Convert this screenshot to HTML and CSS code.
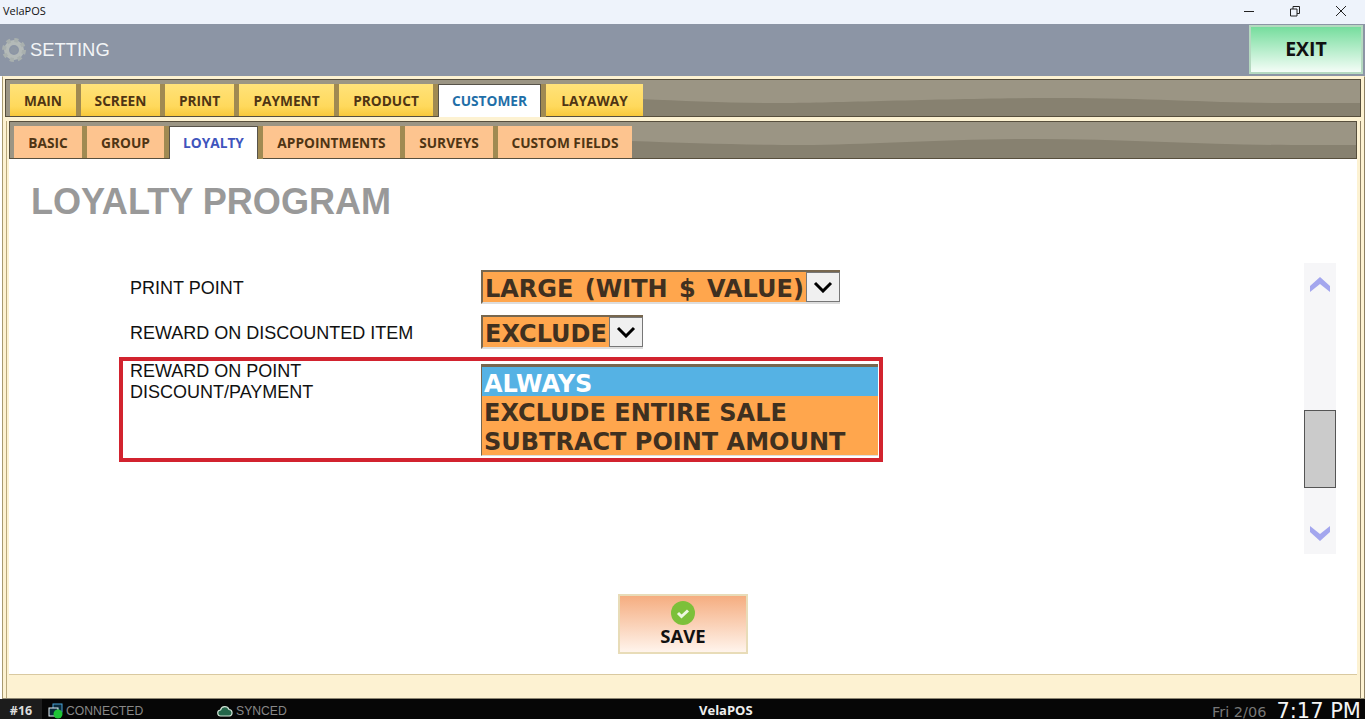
FILE: index.html
```html
<!DOCTYPE html>
<html lang="en">

<head>
    <meta charset="UTF-8" />
    <title>VelaPOS</title>
    <link rel="stylesheet" href="styles.css">
</head>

<body>
    <div class="titlebar">
        <span>VelaPOS</span>
        <div class="win-btns">
            <svg width="14" height="14" viewBox="0 0 14 14"><path d="M2 7.500h10" stroke="#222" fill="none"/></svg>
            <svg width="14" height="14" viewBox="0 0 14 14"><path d="M2.500 5h6.500v7h-6.500zM5 5V2.500h6.500v7H9" stroke="#222" fill="none"/></svg>
            <svg width="14" height="14" viewBox="0 0 14 14"><path d="M2 2l10 10M12 2L2 12" stroke="#222" fill="none"/></svg>
        </div>
    </div>

    <header class="topbar">
        <div class="topbar-title">
            <svg class="gear" width="24" height="24" viewBox="0 0 24 24">
                <circle cx="12" cy="12" r="7.500" fill="none" stroke="#b4bab8" stroke-width="5"/>
                <circle cx="12" cy="12" r="10" fill="none" stroke="#a9b0ae" stroke-width="4" stroke-dasharray="4 3.850"/>
                <circle cx="12" cy="12" r="3.500" fill="#8f98a4"/>
            </svg>
            <span>SETTING</span>
        </div>
        <button class="exit-btn">EXIT</button>
    </header>

    <main class="panel">
        <nav class="tabbar">
            <svg class="wave" viewBox="0 0 1354 36" preserveAspectRatio="none"><path d="M634 19C680 21 720 23 773 23S950 18 1051 18 1200 23 1282 23H1354V36H634Z" fill="#878170"/></svg>
            <a class="tab">MAIN</a>
            <a class="tab tab-screen">SCREEN</a>
            <a class="tab tab-print">PRINT</a>
            <a class="tab tab-payment">PAYMENT</a>
            <a class="tab tab-product">PRODUCT</a>
            <a class="tab tab-customer active">CUSTOMER</a>
            <a class="tab tab-layaway">LAYAWAY</a>
        </nav>

        <div class="subpanel">
            <nav class="tabbar subbar">
                <svg class="wave" viewBox="0 0 1346 36" preserveAspectRatio="none"><path d="M620 19C680 21 730 23 793 23S930 17 1024 17 1200 23 1281 23H1346V36H620Z" fill="#878170"/></svg>
                <a class="subtab">BASIC</a>
                <a class="subtab st-group">GROUP</a>
                <a class="subtab st-loyalty active">LOYALTY</a>
                <a class="subtab st-appt">APPOINTMENTS</a>
                <a class="subtab st-surveys">SURVEYS</a>
                <a class="subtab st-custom">CUSTOM FIELDS</a>
            </nav>

            <section class="content">
                <h1>LOYALTY PROGRAM</h1>

                <div class="body-wrap">
                    <div class="form">
                        <div class="row row-print">
                            <label>PRINT POINT</label>
                            <div class="select">
                                <span class="select-val">LARGE (WITH $ VALUE)</span>
                                <span class="select-arrow"><svg width="20" height="12" viewBox="0 0 20 12"><path d="M2 2l8 8 8-8" fill="none" stroke="#000" stroke-width="3"/></svg></span>
                            </div>
                        </div>
                        <div class="row row-item">
                            <label>REWARD ON DISCOUNTED ITEM</label>
                            <div class="select">
                                <span class="select-val">EXCLUDE</span>
                                <span class="select-arrow"><svg width="20" height="12" viewBox="0 0 20 12"><path d="M2 2l8 8 8-8" fill="none" stroke="#000" stroke-width="3"/></svg></span>
                            </div>
                        </div>
                        <div class="row row-marked">
                            <label>REWARD ON POINT<br>DISCOUNT/PAYMENT</label>
                            <ul class="listbox">
                                <li class="selected">ALWAYS</li>
                                <li>EXCLUDE ENTIRE SALE</li>
                                <li>SUBTRACT POINT AMOUNT</li>
                            </ul>
                        </div>
                    </div>

                    <div class="scroller">
                        <svg width="22" height="16" viewBox="0 0 22 16"><path d="M1 15V9L11 0l10 9v6L11 7z" fill="#a3a6ee"/></svg>
                        <div class="thumb"></div>
                        <svg width="22" height="16" viewBox="0 0 22 16"><path d="M1 1v6l10 9 10-9V1L11 9z" fill="#a3a6ee"/></svg>
                    </div>
                </div>

                <div class="save-wrap">
                    <button class="save-btn">
                        <svg width="24" height="24" viewBox="0 0 24 24"><circle cx="12" cy="12" r="12" fill="#7cc03a"/><path d="M7 12l3.500 3.500L17 9.500" fill="none" stroke="#eef7e0" stroke-width="3"/></svg>
                        <span>SAVE</span>
                    </button>
                </div>
            </section>
        </div>
    </main>

    <footer class="statusbar">
        <span class="station">#16</span>
        <span class="stat stat-conn">
            <svg width="16" height="16" viewBox="0 0 16 16"><rect x="5" y="1" width="9" height="8" fill="#0b2a3a" stroke="#4aa3d8"/><rect x="1" y="5" width="9" height="8" fill="#0b2a3a" stroke="#e8f2f8"/><circle cx="10" cy="11" r="4.500" fill="#1fc436"/></svg>
            CONNECTED
        </span>
        <span class="stat stat-sync">
            <svg width="16" height="12" viewBox="0 0 16 12"><path d="M4 11a3 3 0 0 1-.500-6A4.500 4.500 0 0 1 12 4.500 3.300 3.300 0 0 1 12.500 11z" fill="#24664a" stroke="#cfe3d5" stroke-width="1.200"/></svg>
            SYNCED
        </span>
        <span class="brand">VelaPOS</span>
        <span class="date">Fri 2/06</span>
        <span class="clock">7:17 PM</span>
    </footer>
</body>

</html>
```

FILE: styles.css
```css
* {
    box-sizing: border-box;
}

html,
body {
    height: 719px;
    overflow: hidden;
}

body {
    margin: 0;
    display: flex;
    flex-direction: column;
    background: #fff;
    font-family: "Liberation Sans", sans-serif;
}

.titlebar {
    height: 24px;
    flex: none;
    display: flex;
    align-items: center;
    justify-content: space-between;
    padding: 0 0 3px 3px;
    background: #eef3fb;
    font-family: "Open Sans", sans-serif;
    font-size: 11px;
    color: #111;
}

.win-btns {
    display: flex;
    gap: 32px;
    padding-right: 17px;
}

.topbar {
    height: 52px;
    flex: none;
    display: flex;
    justify-content: space-between;
    padding: 1px 2px 2px 2px;
    background: #8c95a5;
}

.topbar-title {
    display: flex;
    align-items: center;
    gap: 4px;
    color: #f2f4f6;
    font-size: 18.400px;
}

.exit-btn {
    width: 114px;
    padding: 0 0 2px;
    border: 2px solid #b5d9c0;
    background: linear-gradient(#76dd9d, #f4fdf7);
    font-family: "Open Sans", sans-serif;
    font-weight: 700;
    font-size: 19.500px;
    color: #111;
}

.panel {
    height: 623px;
    flex: none;
    margin-left: 2px;
    padding: 2px 3px 0 2px;
    display: flex;
    flex-direction: column;
    background: #fdf2d2;
    border-left: 1px solid #a89a70;
    border-right: 1px solid #8d8064;
    border-bottom: 1px solid #8d8672;
    border-top: 1px solid #fdf2d2;
}

.tabbar {
    position: relative;
    height: 38px;
    flex: none;
    display: flex;
    align-items: flex-end;
    padding-left: 4px;
    background: #9b9584;
    border: 1px solid #574f3d;
}

.wave {
    position: absolute;
    left: 0;
    top: 0;
    width: 100%;
    height: 100%;
}

.tab,
.subtab {
    position: relative;
    height: 32px;
    display: flex;
    align-items: center;
    justify-content: center;
    margin-right: 5px;
    padding-top: 1px;
    font-family: "Open Sans", sans-serif;
    font-size: 13.700px;
    font-weight: 700;
    color: #4f3514;
    box-shadow: 5px 0 0 #a08a52;
}

.tab {
    width: 66px;
    background: linear-gradient(#ffe27a, #ffd95c 70%, #f8c83a);
}

.tab-screen { width: 79px; }
.tab-print { width: 69px; }
.tab-payment { width: 95px; }
.tab-product { width: 94px; }
.tab-customer { width: 103px; }
.tab-layaway { width: 97px; box-shadow: none; }

.tab.active,
.subtab.active {
    height: 33px;
    margin-bottom: -1px;
    padding: 0 0 1px;
    background: #fff;
    border: 1px solid #57534a;
    border-bottom: none;
}

.tab.active {
    color: #1f6fa8;
}

.subpanel {
    flex: 1;
    margin-top: 4px;
    margin-left: 1px;
    padding: 0 3px 0 2px;
    display: flex;
    flex-direction: column;
    border-left: 1px solid #b9a97c;
    border-right: 1px solid #8d8064;
}

.subtab {
    width: 68px;
    background: #fdc48f;
}

.st-group { width: 77px; }
.st-loyalty { width: 89px; }
.st-appt { width: 137px; }
.st-surveys { width: 88px; }
.st-custom { width: 134px; box-shadow: none; }

.subtab.active {
    color: #3f55bd;
}

.content {
    height: 516px;
    flex: none;
    display: flex;
    flex-direction: column;
    background: #fff;
    border-bottom: 1px solid #d9c9a0;
}

h1 {
    margin: 22px 0 0 22px;
    font-size: 36.100px;
    line-height: 41px;
    font-weight: 700;
    color: #999;
}

.body-wrap {
    display: flex;
    justify-content: space-between;
    margin-top: 41px;
    padding-right: 21px;
}

.form {
    padding: 7px 0 0 121px;
}

.row {
    display: grid;
    grid-template-columns: 351px auto;
    justify-content: start;
}

.row label {
    font-size: 18px;
    line-height: 21px;
    color: #111;
}

.row-print {
    height: 45px;
}

.row-print label,
.row-item label {
    padding-top: 8px;
}

.row-item {
    height: 42px;
}

.row-marked {
    width: 764px;
    height: 105px;
    margin-left: -11px;
    padding: 0 1px 0 7px;
    border: 4px solid #d2232f;
    grid-template-columns: 351px 1fr;
}

.select {
    display: flex;
    justify-self: start;
    height: 34px;
    background: #ffa64d;
    border-top: 2px solid #77674f;
    border-left: 2px solid #77674f;
    border-bottom: 2px solid #ddd;
}

.select-val {
    padding: 0 2px;
    font-family: "DejaVu Sans", sans-serif;
    font-weight: 700;
    font-size: 24px;
    line-height: 35px;
    word-spacing: 3px;
    color: #3f3020;
}

.select-arrow {
    width: 34px;
    display: flex;
    align-items: center;
    justify-content: center;
    background: #f0f0f0;
    border: 1px solid #777;
}

.listbox {
    margin: 3px 0 0;
    padding: 0;
    list-style: none;
    height: 92px;
    background: #ffa64d;
    border-top: 3px solid #77674f;
    border-left: 1px solid #77674f;
    border-bottom: 1px solid #ddd;
    font-family: "DejaVu Sans", sans-serif;
    font-weight: 700;
    font-size: 24px;
    color: #3f3020;
}

.listbox li {
    height: 29px;
    padding-left: 2px;
    line-height: 35px;
}

.listbox .selected {
    background: #55b2e4;
    color: #fff;
}

.scroller {
    width: 32px;
    height: 291px;
    display: flex;
    flex-direction: column;
    align-items: center;
    justify-content: space-between;
    padding: 14px 0 13px;
    background: #f6f6f8;
    position: relative;
}

.thumb {
    position: absolute;
    left: 0;
    top: 147px;
    width: 32px;
    height: 78px;
    background: #cbcbcb;
    border: 1px solid #555;
}

.save-wrap {
    display: flex;
    justify-content: center;
    margin-top: 40px;
}

.save-btn {
    width: 130px;
    height: 60px;
    display: flex;
    flex-direction: column;
    align-items: center;
    padding: 5px 0 0;
    background: linear-gradient(#f5ad80, #fff4ec);
    border: 2px solid #e8dcb8;
    font-family: "Open Sans", sans-serif;
    font-weight: 700;
    font-size: 18.500px;
    line-height: 22px;
    color: #111;
}

.statusbar {
    height: 20px;
    flex: none;
    display: flex;
    align-items: center;
    position: relative;
    background: #060606;
    color: #888;
    font-size: 12.200px;
}

.station {
    width: 42px;
    height: 100%;
    text-align: center;
    line-height: 24px;
    background: #1c1c1c;
    color: #ddd;
    font-family: "Open Sans", sans-serif;
    font-weight: 700;
    font-size: 12.500px;
}

.stat {
    display: flex;
    align-items: center;
    gap: 2px;
    margin-top: 4px;
}

.stat-conn {
    width: 175px;
    padding-left: 6px;
}

.stat-sync {
    gap: 3px;
}

.brand {
    position: absolute;
    left: 699px;
    top: 2px;
    color: #eee;
    font-family: "Open Sans", sans-serif;
    font-weight: 700;
    font-size: 13px;
}

.date {
    margin-left: auto;
    margin-right: 10px;
    margin-top: 5px;
    font-family: "DejaVu Sans", sans-serif;
    font-size: 14.500px;
    color: #777;
}

.clock {
    margin-right: 4px;
    margin-top: 3px;
    font-family: "DejaVu Sans", sans-serif;
    font-size: 21px;
    color: #f4f4f4;
    line-height: 20px;
    white-space: nowrap;
}
```
